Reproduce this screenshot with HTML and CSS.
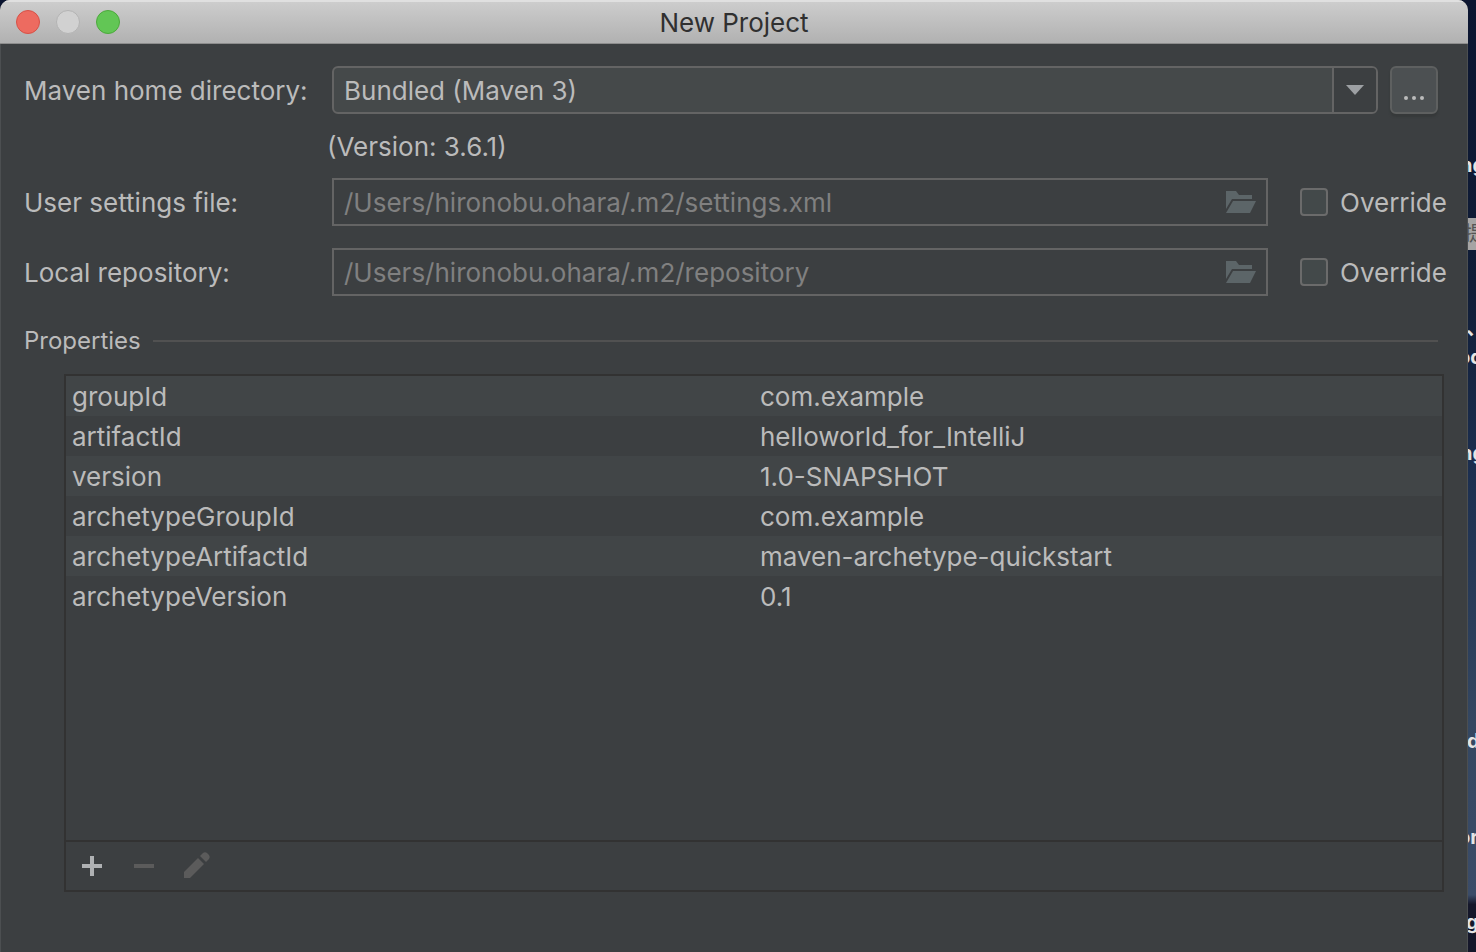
FILE: index.html
```html
<!DOCTYPE html>
<html lang="en">
<head>
<meta charset="utf-8">
<title>New Project</title>
<meta name="viewport" content="width=device-width, initial-scale=1">
<link rel="stylesheet" href="styles.css">
</head>
<body>
<div class="desktop" aria-hidden="true">
  <span class="desk-label l1">ng</span>
  <span class="desk-label l2">提</span>
  <span class="desk-label l3">、</span>
  <span class="desk-label l4">od</span>
  <span class="desk-label l5">ng</span>
  <span class="desk-label l6">d</span>
  <span class="desk-label l7">or</span>
  <span class="desk-label l8">g</span>
</div>
<main class="window">
  <header class="titlebar">
    <div class="lights">
      <button class="light close" aria-label="Close"></button>
      <button class="light minimize" aria-label="Minimize" disabled></button>
      <button class="light zoom" aria-label="Zoom"></button>
    </div>
    <h1 class="title">New Project</h1>
  </header>
  <form class="content">
    <div class="row home-row">
      <label class="label" for="home">Maven home directory:</label>
      <div class="combo">
        <select class="select" id="home"><option>Bundled (Maven 3)</option></select>
        <span class="arrow"><svg width="18" height="10" viewBox="0 0 18 10"><path d="M0 0H18L9 10Z" fill="#9da0a3"/></svg></span>
      </div>
      <button class="browse" type="button" aria-label="Browse"><svg width="22" height="6" viewBox="0 0 22 6" fill="#bbbbbb"><circle cx="3" cy="3" r="2"/><circle cx="11" cy="3" r="2"/><circle cx="19" cy="3" r="2"/></svg></button>
    </div>
    <p class="version">(Version: 3.6.1)</p>
    <div class="row">
      <label class="label" for="settings">User settings file:</label>
      <div class="field">
        <input class="input" id="settings" type="text" value="/Users/hironobu.ohara/.m2/settings.xml" disabled>
        <svg class="folder" width="30" height="22" viewBox="0 0 30 22"><path d="M0 0H10L13 4H26V8H6L0 18Z"/><path d="M7 10H30L24 22H0Z"/></svg>
      </div>
      <label class="override"><input class="check" type="checkbox"><span class="override-text">Override</span></label>
    </div>
    <div class="row repo-row">
      <label class="label" for="repo">Local repository:</label>
      <div class="field">
        <input class="input" id="repo" type="text" value="/Users/hironobu.ohara/.m2/repository" disabled>
        <svg class="folder" width="30" height="22" viewBox="0 0 30 22"><path d="M0 0H10L13 4H26V8H6L0 18Z"/><path d="M7 10H30L24 22H0Z"/></svg>
      </div>
      <label class="override"><input class="check" type="checkbox"><span class="override-text">Override</span></label>
    </div>
    <h2 class="section">Properties</h2>
    <section class="panel">
      <div class="table-area">
        <table class="properties">
          <tbody>
            <tr><td>groupId</td><td>com.example</td></tr>
            <tr><td>artifactId</td><td>helloworld_for_IntelliJ</td></tr>
            <tr><td>version</td><td>1.0-SNAPSHOT</td></tr>
            <tr><td>archetypeGroupId</td><td>com.example</td></tr>
            <tr><td>archetypeArtifactId</td><td>maven-archetype-quickstart</td></tr>
            <tr><td>archetypeVersion</td><td>0.1</td></tr>
          </tbody>
        </table>
      </div>
      <div class="toolbar">
        <button class="tool" type="button" aria-label="Add"><svg width="28" height="28" viewBox="0 0 28 28"><path d="M12 4h4v8h8v4h-8v8h-4v-8H4v-4h8z" fill="#afb1b3"/></svg></button>
        <button class="tool" type="button" aria-label="Remove" disabled><svg width="28" height="28" viewBox="0 0 28 28"><path d="M4 12h20v4H4z" fill="#5b5b5b"/></svg></button>
        <button class="tool" type="button" aria-label="Edit" disabled><svg width="28" height="28" viewBox="0 0 28 28" fill="#5b5b5b"><path d="M2 20L16 6L22 12L8 26H2Z"/><path d="M18 4L21 1Q23 -0.500 25 1L27 3Q28.500 5 27 7L24 10Z"/></svg></button>
      </div>
    </section>
  </form>
</main>
</body>
</html>
```
FILE: styles.css
```css
* { box-sizing: border-box; }

body {
  margin: 0;
  min-height: 100vh;
  display: flex;
  position: relative;
  overflow: hidden;
  background: linear-gradient(#0b1530 0, #101d37 30%, #1c2f50 50%, #344761 76%, #3b4c68 94%, #15172a 95%);
  color: #bbbbbb;
  font: 26px/32px Inter, "Noto Sans CJK JP", sans-serif;
}

button, input, select { font: inherit; color: inherit; margin: 0; }

/* Desktop icon captions peeking out beside the window */
.desktop { position: absolute; inset: 0; }
.desk-label {
  position: absolute;
  left: calc(100% - 16px);
  color: #e4e4e4;
  font-size: 20px;
  font-weight: 700;
  line-height: 32px;
  white-space: nowrap;
}
.l1 { top: 149px; }
.l2 { top: 218px; left: calc(100% - 12px); background: #a5a4a4; color: #555555; font-weight: 400; }
.l3 { top: 312px; left: calc(100% - 10px); }
.l4 { top: 341px; left: calc(100% - 18px); }
.l5 { top: 437px; }
.l6 { top: 725px; left: calc(100% - 9px); }
.l7 { top: 821px; left: calc(100% - 18px); }
.l8 { top: 906px; left: calc(100% - 10px); }

.window {
  position: relative;
  flex: 1;
  margin-right: 8px;
  display: flex;
  flex-direction: column;
  background: #3c3f41;
  border-radius: 10px 10px 0 0;
  box-shadow: inset -1px 0 #4c4f51, inset 1px 0 #4c4f51;
  overflow: hidden;
}

.titlebar {
  display: grid;
  grid-template-columns: 1fr auto 1fr;
  align-items: center;
  height: 44px;
  padding: 0 16px;
  background: linear-gradient(#cecece, #b1b1b1);
  border-bottom: 1px solid #8d8d8d;
  box-shadow: inset 0 2px #e0e0e0;
}
.lights { display: flex; gap: 16px; }
.light { width: 24px; height: 24px; padding: 0; border: 1px solid; border-radius: 50%; }
.close { background: #ed6b60; border-color: #d75147; }
.minimize { background: #d1d1d1; border-color: #b3b3b3; }
.zoom { background: #62c655; border-color: #4ca93c; }
.title { margin: 0; padding-top: 2px; font-size: 26px; font-weight: 400; color: #303030; }

.content { flex: 1; display: flex; flex-direction: column; padding: 22px 24px 60px; }
.row { display: flex; align-items: center; }
.home-row { padding-right: 6px; }
.label { width: 308px; flex: none; padding-top: 2px; }

.combo {
  flex: 1;
  display: flex;
  position: relative;
  height: 48px;
  border: 2px solid #646464;
  border-radius: 6px;
  background: #45494a;
  overflow: hidden;
}
.select { flex: 1; appearance: none; border: 0; background: none; padding: 2px 54px 0 10px; }
.arrow {
  position: absolute;
  inset: 0 0 0 auto;
  width: 44px;
  display: grid;
  place-items: center;
  border-left: 2px solid #646464;
  background: #3c3f41;
  pointer-events: none;
}
.browse {
  width: 48px;
  height: 48px;
  margin-left: 12px;
  padding: 16px 0 0;
  display: grid;
  place-items: center;
  border: 2px solid #5e6060;
  border-radius: 6px;
  background: #4c5052;
  box-shadow: 0 3px 2px #36393a;
}

.version { margin: 17px 0 15px 303px; }

.field {
  flex: 1;
  display: flex;
  align-items: center;
  height: 48px;
  padding: 0 10px;
  border: 2px solid #646464;
}
.input { flex: 1; min-width: 0; padding: 2px 0 0; border: 0; background: none; color: #808080; }
.folder { fill: #5c6568; }
.override { width: 176px; padding-left: 32px; display: flex; align-items: center; gap: 12px; white-space: nowrap; }
.override-text { padding-top: 2px; }
.check {
  appearance: none;
  flex: none;
  width: 28px;
  height: 28px;
  border: 2px solid #6b6b6b;
  border-radius: 4px;
  background: #43494a;
}
.repo-row { margin-top: 22px; }

.section {
  display: flex;
  align-items: center;
  gap: 12px;
  margin: 29px 6px 17px 0;
  font-size: 24px;
  font-weight: 400;
}
.section::after { content: ""; flex: 1; height: 2px; background: #515151; }

.panel { flex: 1; display: flex; flex-direction: column; margin-left: 40px; border: 2px solid #323232; }
.table-area { flex: 1; }
.properties { width: 100%; table-layout: fixed; border-collapse: collapse; }
.properties td { height: 40px; padding: 2px 6px 0; }
.properties tr:nth-child(odd) { background: #414547; }
.toolbar { display: flex; gap: 24px; padding: 10px 12px; border-top: 2px solid #323232; }
.tool { width: 28px; height: 28px; padding: 0; border: 0; background: none; }
.tool svg { display: block; overflow: visible; }
```
